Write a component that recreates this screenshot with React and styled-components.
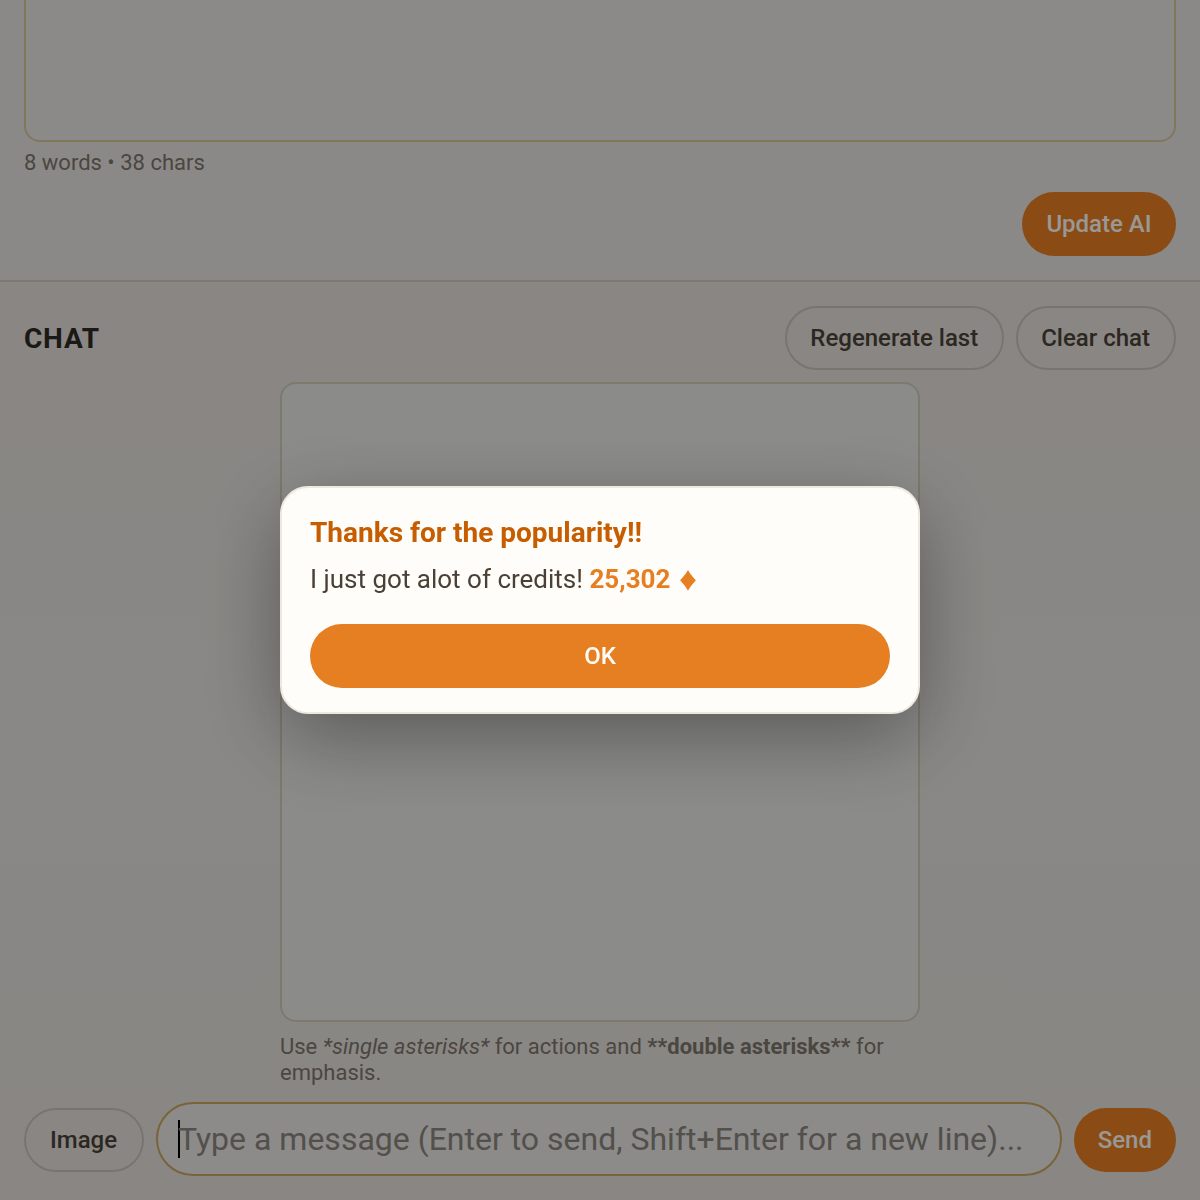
import React from "react";
import styled, { createGlobalStyle } from "styled-components";

const GlobalStyle = createGlobalStyle`
  * {
    box-sizing: border-box;
  }
  html, body {
    margin: 0;
    padding: 0;
  }
  body {
    font-family: Roboto, "Liberation Sans", sans-serif;
    color: #2b2620;
    background: #e6e4df;
  }
`;

const Page = styled.div`
  width: 1200px;
  height: 1200px;
  overflow: hidden;
  display: flex;
  flex-direction: column;
  background: linear-gradient(180deg, #e6e3df 0%, #e4e0dc 30%, #e5e3df 60%, #e5e0dc 100%);
`;

const PromptSection = styled.section`
  padding: 0 24px 24px;
  border-bottom: 2px solid #cfcabc;
  background: #e7e5e1;
`;

const PromptBox = styled.div`
  height: 142px;
  border: 2px solid #d8c89a;
  border-top: none;
  border-radius: 0 0 16px 16px;
  background: #e8e7e3;
`;

const Counter = styled.div`
  margin-top: 8px;
  font-size: 22px;
  line-height: 26px;
  color: #7d766c;
`;

const UpdateRow = styled.div`
  display: flex;
  justify-content: flex-end;
  margin-top: 16px;
`;

const PillButton = styled.button`
  height: 64px;
  padding: ${(p) => (p.$primary ? "0 24px" : "0 24px 0 23px")};
  border-radius: 32px;
  font-family: inherit;
  font-size: 24px;
  font-weight: 500;
  white-space: nowrap;
  border: ${(p) => (p.$primary ? "none" : "2px solid #c8c4ba")};
  background: ${(p) => (p.$primary ? "#e67e22" : "transparent")};
  color: ${(p) => (p.$primary ? "#fffdf9" : "#4a4237")};
`;

const UpdateButton = styled(PillButton)`
  min-width: 154px;
`;

const ComposerButton = styled(PillButton)`
  flex: none;
  margin-bottom: 4px;
  min-width: ${(p) => p.$minWidth || 0}px;
`;

const ChatSection = styled.section`
  flex: 1;
  padding: 24px 24px 0;
  display: flex;
  flex-direction: column;
`;

const ChatHeader = styled.div`
  display: flex;
  align-items: center;
  justify-content: space-between;
`;

const ChatTitle = styled.h2`
  margin: 0;
  font-size: 28px;
  font-weight: 700;
  letter-spacing: 0.8px;
  color: #2e2a25;
`;

const HeaderActions = styled.div`
  display: flex;
  gap: 12px;
`;

const ChatColumn = styled.div`
  width: 640px;
  margin: 12px auto 0;
`;

const ChatLog = styled.div`
  height: 640px;
  border: 2px solid #cfcbb6;
  border-radius: 16px;
  background: #e8e8e5;
`;

const Hint = styled.p`
  margin: 12px 0 0;
  font-size: 22px;
  line-height: 26px;
  color: #7d766c;

  b {
    font-weight: 700;
  }
`;

const Composer = styled.div`
  display: flex;
  align-items: flex-end;
  gap: 12px;
  margin-top: 16px;
`;

const MessageField = styled.div`
  flex: 1;
  height: 74px;
  padding-left: 20px;
  display: flex;
  align-items: center;
  border: 2px solid #c9a75e;
  border-radius: 37px;
  background: #e9e8e5;
`;

const Caret = styled.span`
  flex: none;
  width: 2px;
  height: 38px;
  margin-right: -2px;
  background: #000;
`;

const Placeholder = styled.span`
  font-size: 32px;
  white-space: nowrap;
  color: #8a857d;
`;

const Overlay = styled.div`
  position: fixed;
  inset: 0;
  display: flex;
  align-items: center;
  justify-content: center;
  background: rgba(0, 0, 0, 0.4);
`;

const Modal = styled.div`
  width: 640px;
  padding: 28px 28px 24px;
  border: 2px solid #eee9e0;
  border-radius: 28px;
  background: #fffdf9;
  box-shadow: 0 24px 80px rgba(0, 0, 0, 0.35);
`;

const ModalTitle = styled.h3`
  margin: 0;
  font-size: 28px;
  line-height: 34px;
  font-weight: 700;
  color: #c65d00;
`;

const ModalBody = styled.p`
  margin: 12px 0 0;
  font-size: 26px;
  line-height: 34px;
  color: #4a4035;
`;

const Credits = styled.strong`
  font-weight: 700;
  color: #e67e22;
`;

const Gem = styled.span`
  font-family: "Noto Sans CJK SC", sans-serif;
  font-size: 22px;
  font-weight: 400;
  line-height: 1;
`;

const OkButton = styled.button`
  display: block;
  width: 100%;
  height: 64px;
  margin-top: 28px;
  border: none;
  border-radius: 32px;
  background: #e67e22;
  color: #fffdf9;
  font-family: inherit;
  font-size: 24px;
  font-weight: 500;
`;

export default function App() {
  return (
    <Page>
      <GlobalStyle />
      <PromptSection>
        <PromptBox />
        <Counter>8 words • 38 chars</Counter>
        <UpdateRow>
          <UpdateButton $primary>Update AI</UpdateButton>
        </UpdateRow>
      </PromptSection>
      <ChatSection>
        <ChatHeader>
          <ChatTitle>CHAT</ChatTitle>
          <HeaderActions>
            <PillButton>Regenerate last</PillButton>
            <PillButton>Clear chat</PillButton>
          </HeaderActions>
        </ChatHeader>
        <ChatColumn>
          <ChatLog />
          <Hint>
            Use <em>*single asterisks*</em> for actions and <b>**double asterisks**</b> for emphasis.
          </Hint>
        </ChatColumn>
        <Composer>
          <ComposerButton $minWidth={120}>Image</ComposerButton>
          <MessageField>
            <Caret />
            <Placeholder>Type a message (Enter to send, Shift+Enter for a new line)...</Placeholder>
          </MessageField>
          <ComposerButton $primary>Send</ComposerButton>
        </Composer>
      </ChatSection>
      <Overlay>
        <Modal>
          <ModalTitle>Thanks for the popularity!!</ModalTitle>
          <ModalBody>
            I just got alot of credits! <Credits>25,302 <Gem>♦</Gem></Credits>
          </ModalBody>
          <OkButton>OK</OkButton>
        </Modal>
      </Overlay>
    </Page>
  );
}
